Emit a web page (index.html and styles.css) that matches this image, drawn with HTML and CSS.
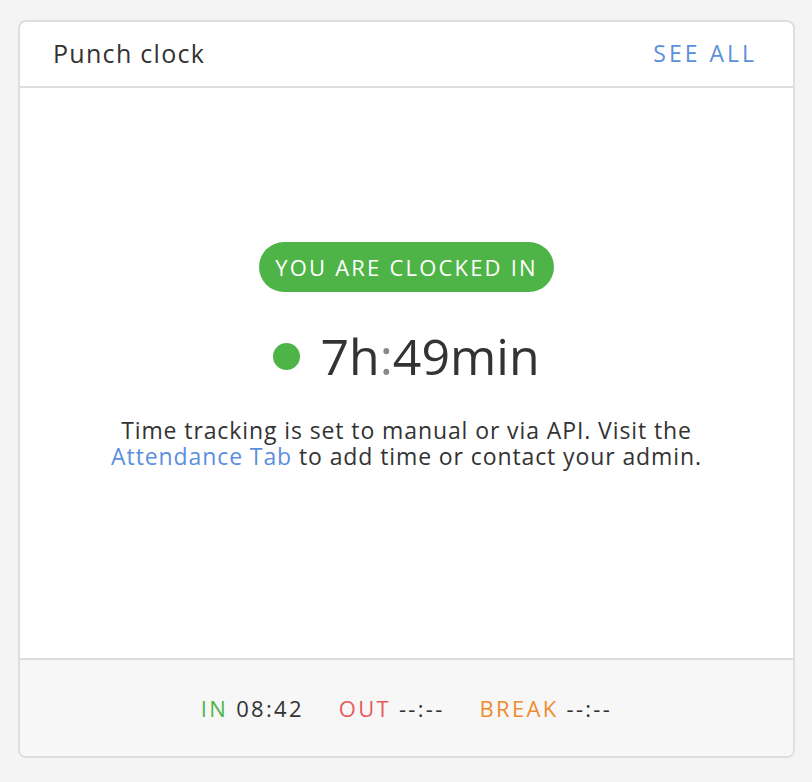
FILE: index.html
```html
<!DOCTYPE html>
<html>
<head>
<meta charset="utf-8">
<link rel="stylesheet" href="styles.css">
</head>
<body>
<div class="card">
  <div class="card-header">
    <span class="title">Punch clock</span>
    <a class="see-all">SEE ALL</a>
  </div>
  <div class="card-body">
    <div class="badge">YOU ARE CLOCKED IN</div>
    <div class="timer"><span class="dot"></span><span class="time">7h<span class="colon">:</span>49min</span></div>
    <p class="note"><span class="line">Time tracking is set to manual or via API. Visit the</span><span class="line"><a class="link">Attendance Tab</a> to add time or contact your admin.</span></p>
  </div>
  <div class="card-footer">
    <span class="stat"><span class="in">IN</span> 08:42</span>
    <span class="stat"><span class="out">OUT</span> --:--</span>
    <span class="stat"><span class="brk">BREAK</span> --:--</span>
  </div>
</div>
</body>
</html>
```
FILE: styles.css
```css
html, body { margin: 0; padding: 0; }
body {
  background: #f4f4f4;
  font-family: "Open Sans", "Noto Sans", sans-serif;
  color: #333;
  padding: 20px 17px 0 18px;
  height: 782px;
  box-sizing: border-box;
}
.card {
  height: 738px;
  border: 2px solid #dedede;
  border-radius: 8px;
  background: #fff;
  display: flex;
  flex-direction: column;
  overflow: hidden;
  box-sizing: border-box;
}
.card-header {
  height: 66px;
  border-bottom: 2px solid #dedede;
  display: flex;
  align-items: center;
  justify-content: space-between;
  padding: 0 36px 0 33px;
  box-sizing: border-box;
}
.title { font-size: 25px; letter-spacing: 1.3px; color: #333; margin-top: -2px; }
.see-all { font-size: 23px; color: #5b8fde; letter-spacing: 3px; margin-top: -3px; }
.card-body {
  flex: 1;
  display: flex;
  flex-direction: column;
  align-items: center;
  padding-top: 154px;
}
.badge {
  background: #4fb447;
  color: #fff;
  font-size: 22px;
  letter-spacing: 2.2px;
  height: 50px;
  line-height: 50px;
  padding: 0 16px 0 16px;
  border-radius: 25px;
}
.timer {
  display: flex;
  align-items: center;
  margin-top: 14px;
  height: 100px;
}
.dot {
  width: 27px;
  height: 27px;
  border-radius: 50%;
  background: #4fb447;
  margin-right: 20px;
}
.time { font-size: 50px; color: #333; }
.colon { color: #888; }
.note {
  margin: 11px 0 0;
  display: flex;
  flex-direction: column;
  align-items: center;
  text-align: center;
  font-size: 23px;
  letter-spacing: 0.9px;
  color: #333;
}
.line { display: block; height: 26px; line-height: 26px; white-space: nowrap; }
.link { color: #5b8fde; }
.card-footer {
  height: 98px;
  border-top: 2px solid #dedede;
  background: #f7f7f7;
  display: flex;
  justify-content: center;
  align-items: center;
  gap: 35px;
  box-sizing: border-box;
  font-size: 22px;
  letter-spacing: 2.3px;
}
.in { color: #4fb447; }
.out { color: #e85b5b; }
.brk { color: #f08b2f; }
```
